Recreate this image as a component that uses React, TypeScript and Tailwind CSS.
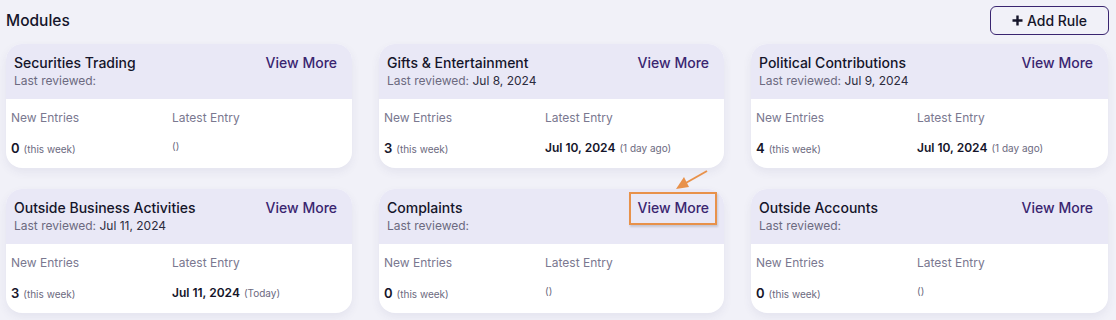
import React from 'react'

type Module = {
  name: string
  reviewed: string
  count: number
  latest: string
  ago: string
  highlight?: boolean
}

const MODULES: Module[] = [
  { name: 'Securities Trading', reviewed: '', count: 0, latest: '', ago: '()' },
  { name: 'Gifts & Entertainment', reviewed: 'Jul 8, 2024', count: 3, latest: 'Jul 10, 2024', ago: '(1 day ago)' },
  { name: 'Political Contributions', reviewed: 'Jul 9, 2024', count: 4, latest: 'Jul 10, 2024', ago: '(1 day ago)' },
  { name: 'Outside Business Activities', reviewed: 'Jul 11, 2024', count: 3, latest: 'Jul 11, 2024', ago: '(Today)' },
  { name: 'Complaints', reviewed: '', count: 0, latest: '', ago: '()', highlight: true },
  { name: 'Outside Accounts', reviewed: '', count: 0, latest: '', ago: '()' },
]

function ModuleCard({ m }: { m: Module }) {
  return (
    <div className="relative h-[124px] rounded-[16px] bg-white shadow-[0_4px_10px_rgba(60,60,110,0.07)]">
      <div className="flex h-[55px] items-start justify-between rounded-t-[16px] bg-[#e9e8f6] pl-[8px] pr-[15px] pt-[10px]">
        <div>
          <div className="text-[14px] font-medium leading-[18px] text-[#15152a]">{m.name}</div>
          <div className="mt-[1px] text-[12px] leading-[16px] text-[#6c6a80]">
            Last reviewed: <span className="text-[#2c2b3d]">{m.reviewed}</span>
          </div>
        </div>
        <div className="relative flex">
          <span className="text-[14px] font-medium leading-[18px] text-[#3a2570]">View More</span>
          {m.highlight && (
            <div className="absolute left-[-9px] top-[-7px] h-[33px] w-[88px] border-2 border-[#e8914a] shadow-[1px_2px_2px_rgba(0,0,0,0.15)]" />
          )}
        </div>
      </div>
      <div className="grid grid-cols-[161px_1fr] px-[5px] pt-[11px]">
        <div className="text-[12px] leading-[16px] text-[#7a7890]">New Entries</div>
        <div className="text-[12px] leading-[16px] text-[#7a7890]">Latest Entry</div>
        <div className="mt-[13px] flex h-[18px] items-baseline gap-[4px]">
          <span className="text-[13px] font-semibold text-[#15152a]">{m.count}</span>
          <span className="text-[10px] text-[#6c6a80]">(this week)</span>
        </div>
        <div className="mt-[13px] flex h-[18px] items-baseline gap-[4px]">
          {m.latest && <span className="text-[12px] font-semibold text-[#15152a]">{m.latest}</span>}
          <span className="text-[10px] text-[#6c6a80]">{m.ago}</span>
        </div>
      </div>
    </div>
  )
}

export default function App() {
  return (
    <div className="relative h-[320px] w-[1116px] overflow-hidden bg-[#f1f1f8] pl-[6px] pr-[7px] pt-[6px] font-['Inter',sans-serif]">
      <div className="flex items-center justify-between">
        <h1 className="text-[15.5px] font-medium text-[#15152a]">Modules</h1>
        <button className="flex h-[29px] w-[119px] items-center justify-center gap-[4px] rounded-[6px] border-[1.5px] border-[#3a2570] text-[14px] font-medium text-[#15152a]">
          <svg width="11" height="11" viewBox="0 0 11 11">
            <path d="M5.5 0.5v10M0.5 5.5h10" stroke="#15152a" strokeWidth="2.4" />
          </svg>
          Add Rule
        </button>
      </div>
      <div className="mt-[9px] grid grid-cols-[346px_345px_357px] gap-x-[27px] gap-y-[21px]">
        {MODULES.map(m => <ModuleCard key={m.name} m={m} />)}
      </div>
      <svg className="pointer-events-none absolute left-0 top-0" width="1116" height="320">
        <line x1="707" y1="171" x2="684" y2="184" stroke="#e8914a" strokeWidth="2" />
        <polygon points="676,189 684,177 689,187" fill="#e8914a" />
      </svg>
    </div>
  )
}
